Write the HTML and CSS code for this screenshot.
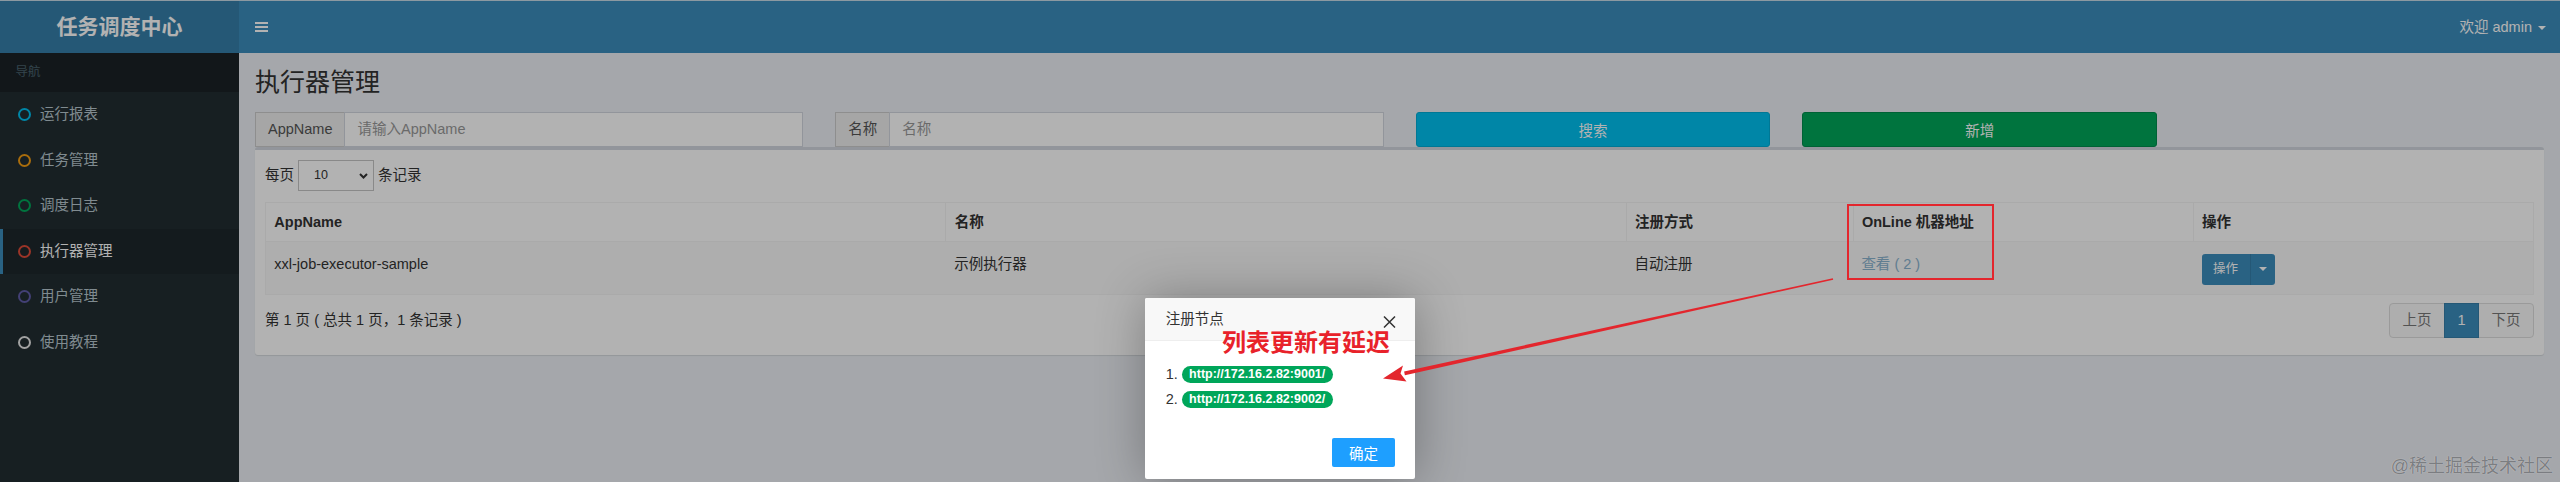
FILE: index.html
```html
<!DOCTYPE html>
<html lang="zh-CN">
<head>
    <meta charset="UTF-8">
    <meta name="viewport" content="width=device-width, initial-scale=1.0">
    <title>执行器管理</title>
    <link rel="stylesheet" href="styles.css">
</head>
<body>

    <!-- Header -->
    <header class="main-header">
        <div class="logo">任务调度中心</div>
        <nav class="navbar">
            <span class="sidebar-toggle">
                <svg width="13" height="10" viewBox="0 0 13 10"><rect y="0" width="13" height="2"/><rect y="4" width="13" height="2"/><rect y="8" width="13" height="2"/></svg>
            </span>
            <span class="user-menu">欢迎 admin <span class="caret"></span></span>
        </nav>
    </header>

    <div class="wrapper">
        <!-- Sidebar -->
        <aside class="sidebar">
            <div class="nav-header">导航</div>
            <ul class="menu">
                <li><span class="dot aqua"></span>运行报表</li>
                <li><span class="dot yellow"></span>任务管理</li>
                <li><span class="dot green"></span>调度日志</li>
                <li class="active"><span class="dot red"></span>执行器管理</li>
                <li><span class="dot purple"></span>用户管理</li>
                <li><span class="dot grey"></span>使用教程</li>
            </ul>
        </aside>

        <!-- Content -->
        <main class="content">
            <h1 class="page-title">执行器管理</h1>

            <div class="toolbar">
                <div class="col col-3">
                    <div class="input-group">
                        <span class="addon">AppName</span>
                        <span class="input">请输入AppName</span>
                    </div>
                </div>
                <div class="col col-3">
                    <div class="input-group">
                        <span class="addon">名称</span>
                        <span class="input">名称</span>
                    </div>
                </div>
                <div class="col col-2">
                    <button class="btn btn-info">搜索</button>
                </div>
                <div class="col col-2">
                    <button class="btn btn-success">新增</button>
                </div>
            </div>

            <div class="box">
                <div class="box-body">
                    <div class="length-menu">
                        每页
                        <span class="select">10
                            <svg class="chevron" width="9" height="6" viewBox="0 0 9 6"><path d="M1 1 L4.5 4.5 L8 1" fill="none" stroke="#333" stroke-width="2"/></svg>
                        </span>
                        条记录
                    </div>

                    <table class="data-table">
                        <colgroup>
                            <col style="width: 30%">
                            <col style="width: 30%">
                            <col style="width: 10%">
                            <col style="width: 15%">
                            <col style="width: 15%">
                        </colgroup>
                        <thead>
                            <tr>
                                <th>AppName</th>
                                <th>名称</th>
                                <th>注册方式</th>
                                <th>OnLine 机器地址</th>
                                <th>操作</th>
                            </tr>
                        </thead>
                        <tbody>
                            <tr>
                                <td>xxl-job-executor-sample</td>
                                <td>示例执行器</td>
                                <td>自动注册</td>
                                <td><a class="link">查看 ( 2 )</a></td>
                                <td>
                                    <div class="btn-group">
                                        <span class="btn-sm">操作</span>
                                        <span class="btn-sm toggle"><span class="caret"></span></span>
                                    </div>
                                </td>
                            </tr>
                        </tbody>
                    </table>

                    <div class="table-footer">
                        <div class="info">第 1 页 ( 总共 1 页，1 条记录 )</div>
                        <ul class="pagination">
                            <li class="disabled"><a>上页</a></li>
                            <li class="current"><a>1</a></li>
                            <li class="disabled"><a>下页</a></li>
                        </ul>
                    </div>
                </div>
            </div>
        </main>
    </div>

    <!-- Modal backdrop -->
    <div class="backdrop"></div>

    <!-- Registry node dialog -->
    <div class="layer">
        <div class="layer-title">
            注册节点
            <svg class="layer-close" width="13" height="12" viewBox="0 0 13 12"><path d="M1 0.5 L12 11.5 M12 0.5 L1 11.5" stroke="#333" stroke-width="1.5"/></svg>
        </div>
        <div class="layer-content">
            <div class="node"><span class="num">1.</span><span class="badge">http://172.16.2.82:9001/</span></div>
            <div class="node"><span class="num">2.</span><span class="badge">http://172.16.2.82:9002/</span></div>
        </div>
        <div class="layer-btn">
            <button class="ok-btn">确定</button>
        </div>
    </div>

    <!-- Annotations -->
    <div class="mark-box"></div>
    <div class="mark-text">列表更新有延迟</div>
    <svg class="mark-arrow" width="2560" height="482" viewBox="0 0 2560 482">
        <polygon points="1833.2,279.7 1832.8,278.3 1404.1,371.4 1404.9,375.3" fill="#e3262d"/>
        <polygon points="1383,378.5 1403,365.5 1400.5,373.5 1406.5,381.5" fill="#e3262d"/>
    </svg>

    <div class="watermark">@稀土掘金技术社区</div>

</body>
</html>
```

FILE: styles.css
```css
/* Basic styling */
* {
    box-sizing: border-box;
}

body {
    margin: 0;
    width: 2560px;
    height: 482px;
    overflow: hidden;
    position: relative;
    font-family: "Liberation Sans", "Noto Sans CJK SC", sans-serif;
    font-size: 14.5px;
    line-height: 20.7px;
    color: #333;
    background-color: #ecf0f5;
}

/* Header */
.main-header {
    display: flex;
    height: 53px;
    border-top: 1px solid #c9dbe7;
}

.logo {
    width: 239px;
    background-color: #367fa9;
    color: #fff;
    font-size: 21px;
    font-weight: bold;
    line-height: 52px;
    text-align: center;
}

.navbar {
    flex: 1;
    display: flex;
    align-items: center;
    justify-content: space-between;
    padding: 0 14px 0 16px;
    background-color: #3c8dbc;
    color: #fff;
}

.sidebar-toggle svg {
    display: block;
    fill: #fff;
}

.caret {
    display: inline-block;
    width: 0;
    height: 0;
    margin-left: 2px;
    vertical-align: middle;
    border-top: 4px solid;
    border-left: 4px solid transparent;
    border-right: 4px solid transparent;
}

/* Layout */
.wrapper {
    display: flex;
    height: 429px;
}

/* Sidebar */
.sidebar {
    width: 239px;
    background-color: #222d32;
}

.nav-header {
    height: 39px;
    padding: 0 15.5px;
    line-height: 39px;
    font-size: 12.5px;
    color: #4b646f;
    background-color: #1a2226;
}

.menu {
    list-style: none;
    margin: 0;
    padding: 0;
}

.menu li {
    display: flex;
    align-items: center;
    height: 45.5px;
    padding-left: 15px;
    border-left: 3px solid transparent;
    color: #b8c7ce;
}

.menu li.active {
    border-left-color: #3c8dbc;
    background-color: #1e282c;
    color: #fff;
}

.dot {
    width: 13px;
    height: 13px;
    margin-right: 9px;
    border: 2.5px solid;
    border-radius: 50%;
}

.dot.aqua { border-color: #00c0ef; }
.dot.yellow { border-color: #f39c12; }
.dot.green { border-color: #00a65a; }
.dot.red { border-color: #dd4b39; }
.dot.purple { border-color: #605ca8; }
.dot.grey { border-color: #e8e8e8; }

/* Content */
.content {
    flex: 1;
    padding: 16px 16px 0 16px;
}

.page-title {
    margin: 0;
    font-size: 25px;
    line-height: 27.5px;
    font-weight: normal;
}

.toolbar {
    display: flex;
    margin: 15.75px -16px 0 -16px;
}

.col {
    padding: 0 16px;
}

.col-3 { width: 25%; }
.col-2 { width: 16.6667%; }

.input-group {
    display: flex;
    height: 35px;
}

.addon {
    padding: 0 12px;
    line-height: 33px;
    border: 1px solid #ccc;
    border-right: 0;
    background-color: #eee;
    color: #555;
}

.input {
    flex: 1;
    padding: 0 12px;
    line-height: 33px;
    border: 1px solid #d2d6de;
    background-color: #fff;
    color: #999;
}

.btn {
    display: block;
    width: 100%;
    height: 35px;
    border: 1px solid;
    border-radius: 3px;
    font-family: inherit;
    font-size: 14.5px;
    color: #fff;
}

.btn-info {
    background-color: #00c0ef;
    border-color: #00acd6;
}

.btn-success {
    background-color: #00a65a;
    border-color: #008d4c;
}

/* Box */
.box {
    border-top: 3px solid #d2d6de;
    border-radius: 3px;
    background-color: #fff;
    box-shadow: 0 1px 1px rgba(0, 0, 0, 0.1);
}

.box-body {
    padding: 10px 10px 17px 10px;
}

.length-menu {
    display: flex;
    align-items: center;
    gap: 4px;
    height: 31px;
}

.select {
    position: relative;
    width: 76px;
    height: 31px;
    padding-left: 15px;
    line-height: 29px;
    font-size: 12.5px;
    border: 1px solid #c4c4c4;
}

.chevron {
    position: absolute;
    right: 5px;
    top: 12px;
}

/* Table */
.data-table {
    width: 100%;
    margin-top: 11px;
    table-layout: fixed;
    border-collapse: collapse;
    border: 1px solid #f4f4f4;
}

.data-table th {
    padding: 8.3px;
    text-align: left;
    font-weight: bold;
    border-bottom: 1px solid #f4f4f4;
    border-left: 1px solid #f4f4f4;
}

.data-table td {
    padding: 12px 8.3px 9px 8.3px;
    vertical-align: top;
    border-bottom: 1px solid #f4f4f4;
}

.data-table tbody tr {
    background-color: #f9f9f9;
}

.link {
    color: #8ab3cf;
}

.btn-group {
    display: flex;
    width: 73px;
    height: 31px;
    border-radius: 3px;
    overflow: hidden;
    background-color: #3c8dbc;
    color: #fff;
    font-size: 12.5px;
}

.btn-sm {
    width: 48px;
    line-height: 31px;
    text-align: center;
}

.btn-sm.toggle {
    width: 25px;
    border-left: 1px solid #367fa9;
}

.btn-sm.toggle .caret {
    margin: 0;
    border-top-width: 4px;
}

/* Table footer */
.table-footer {
    display: flex;
    align-items: center;
    justify-content: space-between;
    margin-top: 8px;
}

.pagination {
    display: flex;
    list-style: none;
    margin: 0;
    padding: 0;
}

.pagination a {
    display: block;
    height: 35px;
    padding: 0 12.5px;
    line-height: 33px;
    border: 1px solid #ddd;
    margin-left: -1px;
    background-color: #fafafa;
    color: #777;
}

.pagination li:first-child a {
    border-radius: 4px 0 0 4px;
}

.pagination li:last-child a {
    border-radius: 0 4px 4px 0;
}

.pagination .current a {
    position: relative;
    background-color: #3c8dbc;
    border-color: #367fa9;
    color: #fff;
}

/* Modal */
.backdrop {
    position: absolute;
    inset: 0;
    background-color: rgba(0, 0, 0, 0.3);
}

.layer {
    position: absolute;
    left: 1145px;
    top: 297.7px;
    width: 270px;
    border-radius: 2px;
    background-color: #fff;
    box-shadow: 1px 1px 50px rgba(0, 0, 0, 0.3);
}

.layer-title {
    position: relative;
    height: 43.6px;
    padding-left: 20.7px;
    line-height: 42.6px;
    border-bottom: 1px solid #eee;
    border-radius: 2px 2px 0 0;
    background-color: #f8f8f8;
}

.layer-close {
    position: absolute;
    right: 18.7px;
    top: 18.3px;
}

.layer-content {
    padding: 20.7px;
}

.node {
    display: flex;
    align-items: center;
    height: 25px;
}

.num {
    margin-right: 4px;
}

.badge {
    height: 17.7px;
    padding: 0 7.3px;
    line-height: 17.7px;
    border-radius: 9px;
    background-color: #00a65a;
    color: #fff;
    font-size: 12.5px;
    font-weight: bold;
}

.layer-btn {
    padding: 0 20px 12.5px 20px;
    text-align: right;
}

.ok-btn {
    height: 29px;
    margin-top: 5px;
    padding: 0 17px;
    border: 0;
    border-radius: 2px;
    background-color: #1e9fff;
    color: #fff;
    font-family: inherit;
    font-size: 14.5px;
}

/* Annotations */
.mark-box {
    position: absolute;
    left: 1846.5px;
    top: 204.3px;
    width: 147.4px;
    height: 75.7px;
    border: 2px solid #e3262d;
}

.mark-text {
    position: absolute;
    left: 1222px;
    top: 330.5px;
    font-size: 24px;
    line-height: 24px;
    font-weight: bold;
    color: #e8222a;
}

.mark-arrow {
    position: absolute;
    left: 0;
    top: 0;
}

.watermark {
    position: absolute;
    right: 7px;
    bottom: 6px;
    font-size: 18px;
    line-height: 20px;
    color: rgba(95, 98, 102, 0.75);
    text-shadow: 0 0 1px rgba(230, 230, 230, 0.8);
}
```
